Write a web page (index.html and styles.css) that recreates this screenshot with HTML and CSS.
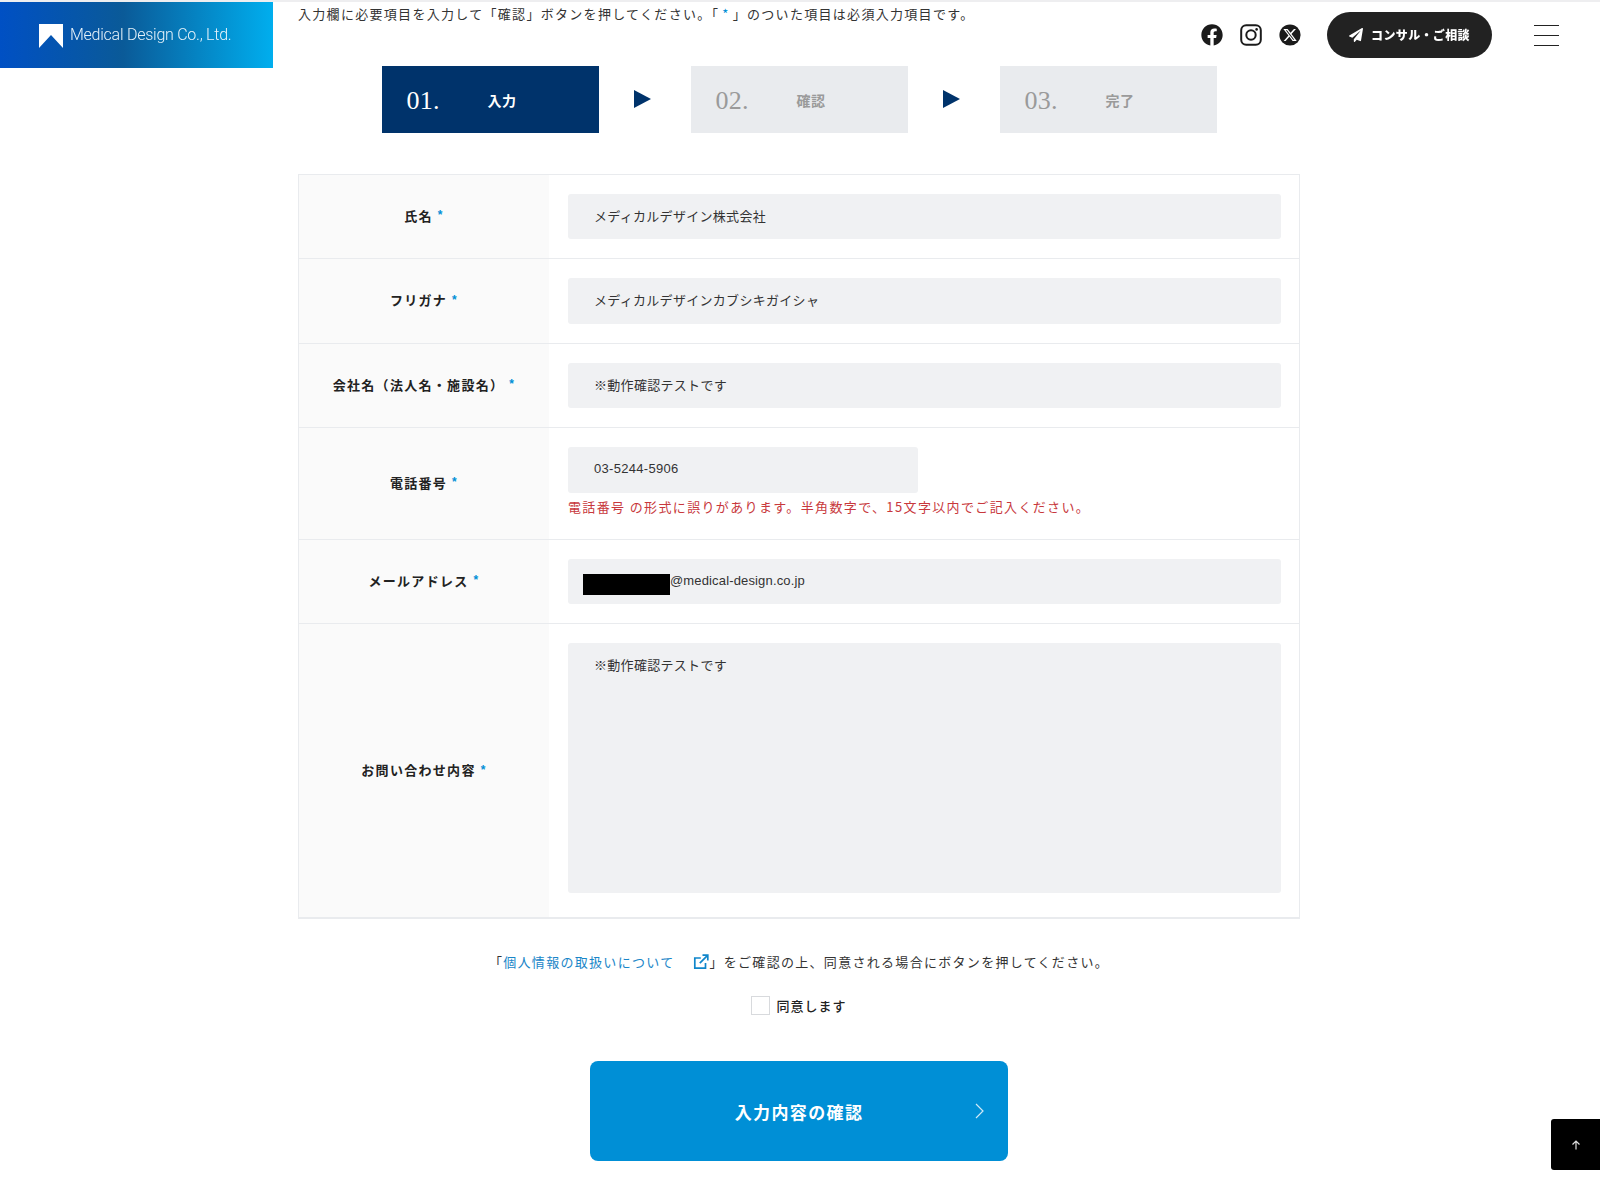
FILE: index.html
```html
<!DOCTYPE html>
<html lang="ja">
<head>
<meta charset="utf-8">
<title>お問い合わせ | Medical Design Co., Ltd.</title>
<link rel="stylesheet" href="styles.css">
</head>
<body>
<header class="site-header">
  <a class="logo" href="#">
    <svg class="logo-mark" viewBox="0 0 24 24" width="24" height="24" aria-hidden="true"><polygon points="0,0 24,0 24,24 12,11 0,24" fill="#fff"/></svg>
    <span class="logo-text">Medical Design Co., Ltd.</span>
  </a>
  <div class="header-actions">
    <a class="social" href="#" aria-label="Facebook">
      <svg viewBox="0 0 512 512" width="22" height="22"><path fill="#1b1b1b" d="M504 256C504 119 393 8 256 8S8 119 8 256c0 123.78 90.69 226.38 209.25 245V327.69h-63V256h63v-54.64c0-62.15 37-96.48 93.67-96.48 27.14 0 55.52 4.84 55.52 4.84v61h-31.28c-30.8 0-40.41 19.12-40.41 38.73V256h68.78l-11 71.69h-57.78V501C413.31 482.38 504 379.78 504 256z"/></svg>
    </a>
    <a class="social" href="#" aria-label="Instagram">
      <svg viewBox="0 0 22 22" width="22" height="22"><rect x="1.2" y="1.2" width="19.6" height="19.6" rx="5" fill="none" stroke="#1b1b1b" stroke-width="2"/><circle cx="11" cy="11" r="4.7" fill="none" stroke="#1b1b1b" stroke-width="2"/><circle cx="16.6" cy="5.4" r="1.3" fill="#1b1b1b"/></svg>
    </a>
    <a class="social" href="#" aria-label="X">
      <svg viewBox="0 0 22 22" width="22" height="22"><circle cx="11" cy="11" r="10.6" fill="#1b1b1b"/><g transform="translate(3.6 3.6) scale(.62)"><path fill="#fff" d="M18.244 2.25h3.308l-7.227 8.26 8.502 11.24H16.17l-5.214-6.817L4.99 21.75H1.68l7.73-8.835L1.254 2.25H8.08l4.713 6.231zm-1.161 17.52h1.833L7.084 4.126H5.117z"/></g></svg>
    </a>
    <a class="consult" href="#">
      <svg viewBox="0 0 512 512" width="14" height="14" aria-hidden="true"><path fill="#fff" d="M476 3.2L12.5 270.6c-18.1 10.4-15.8 35.6 2.2 43.2L121 358.4l287.3-253.2c5.5-4.9 13.3 2.6 8.6 8.3L176 407v80.5c0 23.6 28.5 32.9 42.5 15.8L282 426l124.6 52.2c14.2 6 30.4-2.9 33-18.2l72-432C515 7.8 493.3-6.8 476 3.2z"/></svg>
      <span class="consult-text">コンサル・ご相談</span>
    </a>
    <button class="menu" type="button" aria-label="メニュー"><i></i><i></i><i></i></button>
  </div>
</header>

<main class="page">
  <div class="container">
    <p class="intro">入力欄に必要項目を入力して「確認」ボタンを押してください。「<span class="req-inline">*</span>」のついた項目は必須入力項目です。</p>

    <ol class="steps">
      <li class="step is-active"><span class="step-num">01.</span><span class="step-label">入力</span></li>
      <li class="step-arrow"></li>
      <li class="step"><span class="step-num">02.</span><span class="step-label">確認</span></li>
      <li class="step-arrow"></li>
      <li class="step"><span class="step-num">03.</span><span class="step-label">完了</span></li>
    </ol>

    <form class="form">
      <div class="row">
        <div class="label">氏名<span class="req">*</span></div>
        <div class="value"><div class="field">メディカルデザイン株式会社</div></div>
      </div>
      <div class="row">
        <div class="label">フリガナ<span class="req">*</span></div>
        <div class="value"><div class="field">メディカルデザインカブシキガイシャ</div></div>
      </div>
      <div class="row">
        <div class="label">会社名（法人名・施設名）<span class="req">*</span></div>
        <div class="value"><div class="field">※動作確認テストです</div></div>
      </div>
      <div class="row">
        <div class="label">電話番号<span class="req">*</span></div>
        <div class="value">
          <div class="field field-short">03-5244-5906</div>
          <p class="error">電話番号 の形式に誤りがあります。半角数字で、15文字以内でご記入ください。</p>
        </div>
      </div>
      <div class="row">
        <div class="label">メールアドレス<span class="req">*</span></div>
        <div class="value"><div class="field field-mail"><span class="redact"></span>@medical-design.co.jp</div></div>
      </div>
      <div class="row">
        <div class="label">お問い合わせ内容<span class="req">*</span></div>
        <div class="value"><div class="field field-area">※動作確認テストです</div></div>
      </div>
    </form>

    <p class="policy">「<a href="#">個人情報の取扱いについて<svg class="ext" viewBox="0 0 16 16" width="16" height="16" aria-hidden="true"><path d="M12.5 9v5.2H1.8V4h6M9.5 1.2h5.3v5.3M14.6 1.4L6.8 9.2" fill="none" stroke="#0f86cb" stroke-width="1.7"/></svg></a>」をご確認の上、同意される場合にボタンを押してください。</p>

    <label class="agree"><span class="check"></span><span>同意します</span></label>

    <button class="submit" type="button">
      <span>入力内容の確認</span>
      <svg class="chev" viewBox="0 0 9 16" width="9" height="16" aria-hidden="true"><path d="M1 1l7 7-7 7" fill="none" stroke="#cfe9f7" stroke-width="1.2"/></svg>
    </button>
  </div>
</main>

<a class="to-top" href="#" aria-label="ページ上部へ">
  <svg viewBox="0 0 10 10" width="10" height="10"><path d="M5 9.5V1M1.5 4.5L5 1l3.5 3.5" fill="none" stroke="#ddd" stroke-width="1.2"/></svg>
</a>
</body>
</html>
```

FILE: styles.css
```css
* { box-sizing: border-box; }

html, body { height: 1194px; overflow: hidden; }

body {
  margin: 0;
  border-top: 2px solid #eeeef0;
  background: #fff;
  color: #333;
  font-family: "Liberation Sans", "Noto Sans CJK JP", sans-serif;
  font-size: 13px;
}

a { color: inherit; text-decoration: none; }

/* header, laid over the page */
.site-header {
  position: fixed;
  inset: 2px 0 auto 0;
  display: flex;
  justify-content: space-between;
  align-items: flex-start;
  pointer-events: none;
}

.logo {
  width: 273px;
  height: 66px;
  padding-left: 39px;
  display: flex;
  align-items: center;
  gap: 7px;
  background: linear-gradient(90deg, #0050c4 0%, #0a5a98 45%, #00aeee 100%);
}

.logo-mark { flex: none; margin-top: 1px; }

.logo-text {
  margin-top: -2px;
  font-family: Roboto, "Liberation Sans", sans-serif;
  font-weight: 300;
  font-size: 16px;
  letter-spacing: -.25px;
  color: #e6f2fa;
}

.header-actions {
  display: flex;
  align-items: center;
  padding: 10px 41px 0 0;
  gap: 17px;
}

.social { display: block; width: 22px; height: 22px; }
.social svg { display: block; }

.consult {
  margin-left: 9px;
  width: 165px;
  height: 46px;
  border-radius: 23px;
  background: #222;
  color: #fff;
  display: flex;
  align-items: center;
  justify-content: center;
  gap: 8px;
  font-family: "Noto Sans CJK JP", sans-serif;
  font-weight: 900;
  font-size: 12px;
  letter-spacing: .03em;
}

.consult-text { margin-top: -2px; }

.menu {
  margin-left: 25px;
  width: 25px;
  height: 21px;
  padding: 0;
  border: 0;
  background: none;
  display: flex;
  flex-direction: column;
  justify-content: space-between;
}

.menu i { display: block; height: 1px; background: #222; }

/* page */
.page { padding-right: 2px; }

.container { width: 1002px; margin: 0 auto; }

.intro {
  margin: 0;
  line-height: 24px;
  letter-spacing: .1em;
  font-family: "Noto Sans CJK JP", sans-serif;
}

.req-inline { margin: 0 3px; color: #008fd6; }

.steps {
  list-style: none;
  margin: 40px 0 41px;
  padding: 0;
  display: flex;
  justify-content: center;
  align-items: center;
}

.step {
  width: 217px;
  height: 66.5px;
  padding-left: 25px;
  display: flex;
  align-items: center;
  background: #e9ebee;
  color: #9a9a9a;
}

.step.is-active { background: #00336b; color: #fff; }

.step-num {
  width: 81px;
  margin-top: 3px;
  font-family: "Liberation Serif", serif;
  font-size: 26px;
  font-weight: 400;
  letter-spacing: .01em;
}

.step-label {
  font-family: "Noto Sans CJK JP", sans-serif;
  font-weight: 700;
  font-size: 14px;
  letter-spacing: .03em;
  margin-top: 2px;
}

.step-arrow {
  width: 92px;
  height: 18px;
  margin-top: -1px;
  padding-right: 4px;
  display: flex;
  justify-content: center;
}

.step-arrow::before {
  content: "";
  border-style: solid;
  border-width: 9px 0 9px 17px;
  border-color: transparent transparent transparent #00336b;
}

/* form table */
.form { border: 1px solid #e9ebee; border-bottom-width: 2px; }

.row { display: flex; }
.row + .row { border-top: 1px solid #e9ebee; }

.label {
  flex: none;
  width: 250px;
  padding-bottom: 2px;
  background: #fafafa;
  display: flex;
  align-items: center;
  justify-content: center;
  font-family: "Noto Sans CJK JP", sans-serif;
  font-weight: 700;
  letter-spacing: .1em;
  color: #222;
}

.req {
  margin-left: 5px;
  color: #008fd6;
  font-family: "Liberation Sans", sans-serif;
  font-size: 12px;
  font-weight: 700;
}

.value { flex: 1; padding: 19px 18px 19px 19px; }

.field {
  height: 45.5px;
  padding: 0 0 2px 26px;
  display: flex;
  align-items: center;
  border-radius: 3px;
  background: #f0f1f3;
  color: #333;
  letter-spacing: .3px;
}

.field-short { width: 350px; }

.field-mail { position: relative; padding-left: 102px; letter-spacing: .15px; }

.redact {
  position: absolute;
  left: 15px;
  top: 15px;
  width: 87px;
  height: 21px;
  background: #000;
}

.field-area {
  height: 250px;
  margin-bottom: 5px;
  padding-top: 13px;
  align-items: flex-start;
  line-height: 20px;
}

.error {
  margin: 3px 0 2px;
  line-height: 22px;
  letter-spacing: 1.36px;
  color: #c8383c;
  font-family: "Noto Sans CJK JP", sans-serif;
}

.policy {
  margin: 30.5px 0 0;
  text-align: center;
  line-height: 24px;
  letter-spacing: .1em;
  font-family: "Noto Sans CJK JP", sans-serif;
}

.policy a { color: #1a86c8; }

.ext { margin: 0 0 -3px 19px; }

.agree {
  margin-top: 21.5px;
  display: flex;
  justify-content: center;
  align-items: center;
  gap: 6px;
  height: 20px;
  font-family: "Noto Sans CJK JP", sans-serif;
  font-weight: 500;
  letter-spacing: .08em;
  color: #222;
}

.check {
  width: 19px;
  height: 19px;
  border: 1px solid #d8dadd;
  background: #fff;
}

.submit {
  position: relative;
  display: flex;
  align-items: center;
  justify-content: center;
  width: 418px;
  height: 100px;
  margin: 46px auto 0;
  padding: 0;
  border: 0;
  border-radius: 8px;
  background: #008fd6;
  color: #fff;
  font-family: "Noto Sans CJK JP", sans-serif;
  font-weight: 700;
  font-size: 17px;
  letter-spacing: .08em;
}

.chev { position: absolute; right: 24px; top: 42px; }

.to-top {
  position: fixed;
  right: 0;
  top: 1119px;
  width: 49px;
  height: 51px;
  border-radius: 3px 0 0 3px;
  background: #000;
  display: flex;
  align-items: center;
  justify-content: center;
}
```
